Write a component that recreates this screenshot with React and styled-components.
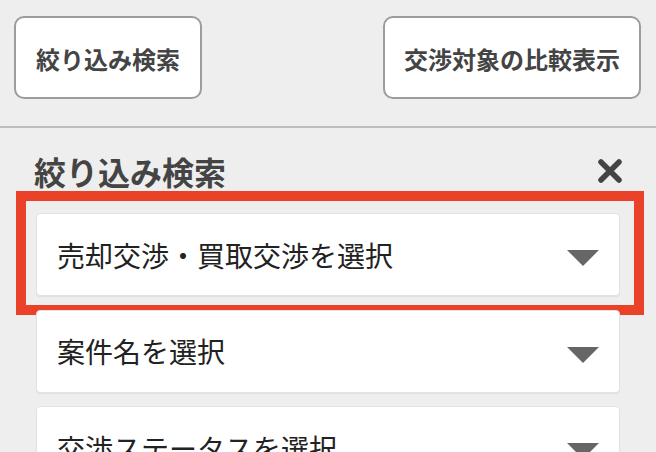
import React from "react";
import styled, { createGlobalStyle } from "styled-components";

const Global = createGlobalStyle`
  html, body {
    margin: 0;
    padding: 0;
    height: 452px;
    overflow: hidden;
    background: #eeeeee;
  }
  body {
    font-family: "Noto Sans CJK JP", "Noto Sans", sans-serif;
  }
  * { box-sizing: border-box; }
`;

const Page = styled.div`
  width: 656px;
  height: 452px;
  background: #eeeeee;
  overflow: hidden;
`;

const Toolbar = styled.div`
  display: flex;
  justify-content: space-between;
  padding: 16px 15px 27px 14px;
  border-bottom: 2px solid #bdbdbd;
`;

const ToolButton = styled.button`
  height: 83px;
  padding: 0 ${(p) => p.$pad}px;
  background: #ffffff;
  border: 2px solid #9c9c9c;
  border-radius: 10px;
  font-family: "Noto Sans CJK JP", sans-serif;
  font-weight: 700;
  font-size: 24px;
  line-height: 1;
  color: #444444;
  padding-top: 3px;
  cursor: pointer;
`;

const Panel = styled.div`
  padding: 23px 0 0;
`;

const HeaderRow = styled.div`
  display: flex;
  justify-content: space-between;
  align-items: center;
  height: 40px;
  padding: 0 33px 0 34px;
`;

const Heading = styled.h2`
  margin: 0;
  font-family: "Noto Sans CJK JP", sans-serif;
  font-weight: 700;
  font-size: 32px;
  line-height: 40px;
  color: #444444;
`;

const CloseButton = styled.button`
  display: flex;
  align-items: center;
  justify-content: center;
  width: 26px;
  height: 26px;
  padding: 0;
  border: none;
  background: transparent;
  margin-top: -1px;
`;

const SelectList = styled.div`
  display: flex;
  flex-direction: column;
  gap: 13.5px;
  padding: 22px 36px 0;
`;

const SelectWrap = styled.div`
  position: relative;
`;

const SelectBox = styled.div`
  display: flex;
  align-items: center;
  justify-content: space-between;
  height: 83px;
  padding: 0 20px 0 20px;
  background: #ffffff;
  border: 1px solid #e2e2e2;
  border-radius: 4px;
  box-shadow: 0 1px 1px rgba(0, 0, 0, 0.06);
`;

const SelectLabel = styled.span`
  font-family: "Noto Sans CJK JP", sans-serif;
  font-weight: 400;
  font-size: 28px;
  line-height: 1;
  color: #222222;
`;

const Caret = styled.svg`
  flex: none;
  margin-top: 7px;
`;

const Highlight = styled.div`
  position: absolute;
  top: -22px;
  left: -20px;
  right: -24px;
  bottom: -19px;
  border: 10px solid #ea4129;
  pointer-events: none;
`;

const CaretIcon = () => (
  <Caret width="32" height="16" viewBox="0 0 32 16">
    <polygon points="0,0 32,0 16,16" fill="#666666" />
  </Caret>
);

const Select = ({ label, highlighted }) => (
  <SelectWrap>
    <SelectBox>
      <SelectLabel>{label}</SelectLabel>
      <CaretIcon />
    </SelectBox>
    {highlighted && <Highlight />}
  </SelectWrap>
);

export default function App() {
  return (
    <Page>
      <Global />
      <Toolbar>
        <ToolButton $pad={20}>絞り込み検索</ToolButton>
        <ToolButton $pad={19}>交渉対象の比較表示</ToolButton>
      </Toolbar>
      <Panel>
        <HeaderRow>
          <Heading>絞り込み検索</Heading>
          <CloseButton aria-label="閉じる">
            <svg width="26" height="26" viewBox="0 0 26 26">
              <path
                d="M4 4 L22 22 M22 4 L4 22"
                stroke="#444444"
                strokeWidth="5.5"
                strokeLinecap="round"
              />
            </svg>
          </CloseButton>
        </HeaderRow>
        <SelectList>
          <Select label="売却交渉・買取交渉を選択" highlighted />
          <Select label="案件名を選択" />
          <Select label="交渉ステータスを選択" />
        </SelectList>
      </Panel>
    </Page>
  );
}
